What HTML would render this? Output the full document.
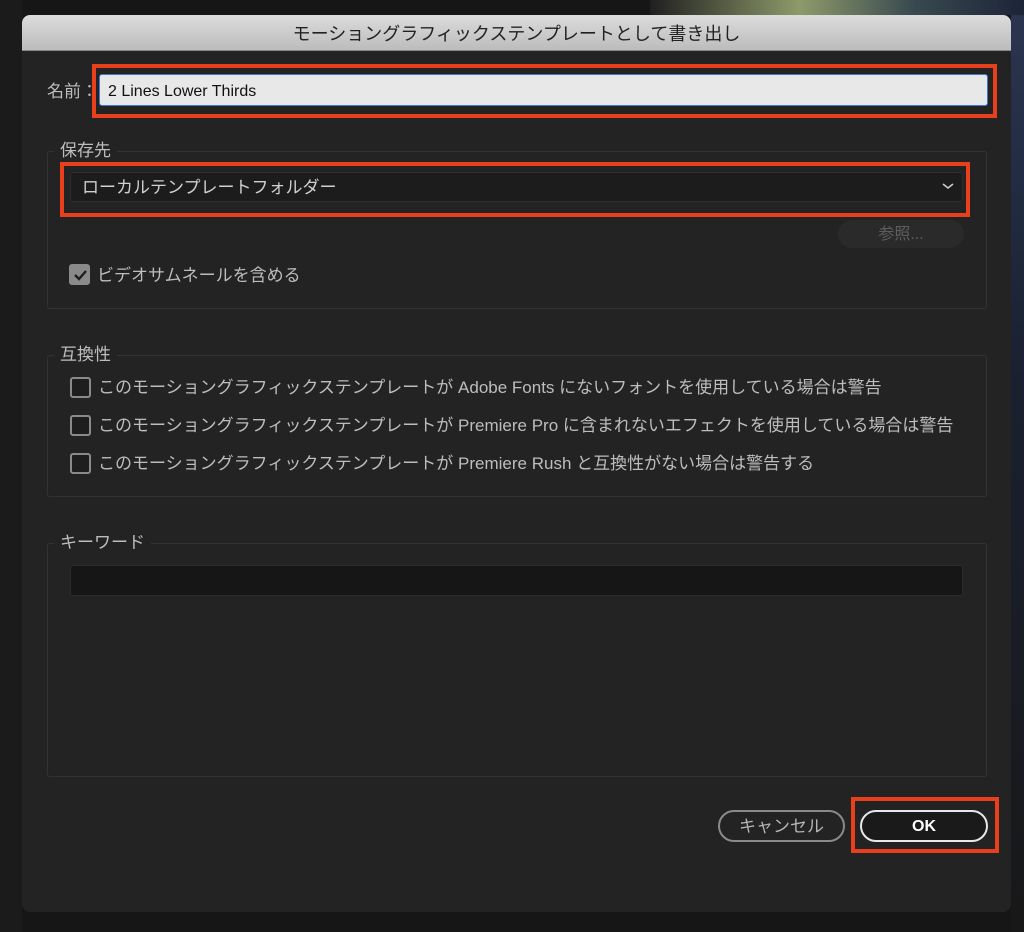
<!DOCTYPE html>
<html><head><meta charset="utf-8"><style>
*{box-sizing:border-box;margin:0;padding:0}
body{width:1024px;height:932px;background:#161616;position:relative;overflow:hidden;font-family:"Liberation Sans","Noto Sans CJK JP",sans-serif;color:#c0c0c0}
.a{position:absolute}
.fs{position:absolute;border:1px solid #333;border-radius:3px}
.lg{position:absolute;background:#232323;padding:0 6px;font-size:17px;color:#bdbdbd;line-height:20px}
.cb{position:absolute;width:21px;height:21px;border:2px solid #8a8a8a;border-radius:3px;background:#1e1e1e}
.t{position:absolute;font-size:17px;color:#bdbdbd;white-space:nowrap;line-height:20px}
.red{position:absolute;border:4px solid #e8401c}
</style></head><body>
<div class="a" style="left:0;top:0;width:22px;height:932px;background:#1b1b1b"></div>
<div class="a" style="left:650px;top:0;width:374px;height:15px;background:linear-gradient(90deg,#202020,#8e9a6a 40%,#3a4a50 70%,#1c2438)"></div>
<div class="a" style="left:1011px;top:15px;width:13px;height:917px;background:linear-gradient(180deg,#2a3550,#1a2030 40%,#181818)"></div>
<div class="a" style="left:22px;top:15px;width:989px;height:897px;background:#232323;border-radius:8px;overflow:hidden">
 <div class="a" style="left:0;top:0;width:989px;height:36px;background:linear-gradient(#dcdcdc,#bcbcbc);border-bottom:1px solid #888;text-align:center;font-size:18px;line-height:38px;color:#222">モーショングラフィックステンプレートとして書き出し</div>
</div>
<div class="t" style="left:47px;top:82px">名前：</div>
<div class="a" style="left:99px;top:74px;width:889px;height:32px;background:#e8e8e8;border:1px solid #3d7ad6;border-radius:3px;color:#111;font-size:16px;line-height:34px;padding-left:8px">2 Lines Lower Thirds</div>
<div class="red" style="left:92px;top:64px;width:905px;height:54px"></div>
<div class="fs" style="left:47px;top:151px;width:940px;height:158px"></div>
<div class="lg" style="left:54px;top:141px">保存先</div>
<div class="a" style="left:70px;top:172px;width:893px;height:30px;background:#1c1c1c;border:1px solid #2e2e2e;border-radius:3px;font-size:17px;line-height:30px;padding-left:11px;color:#d0d0d0">ローカルテンプレートフォルダー</div>
<svg class="a" style="left:941px;top:181px" width="14" height="10"><path d="M2 3l5 4 5-4" stroke="#ccc" stroke-width="1.6" fill="none"/></svg>
<div class="red" style="left:60px;top:162px;width:910px;height:55px"></div>
<div class="a" style="left:838px;top:220px;width:126px;height:28px;background:#2a2a2a;border-radius:14px;text-align:center;line-height:30px;font-size:16px;color:#5e5e5e">参照...</div>
<div class="cb" style="left:69px;top:264px;background:#8a8a8a"></div>
<svg class="a" style="left:70px;top:265px" width="20" height="20"><path d="M5 10l4 4 7-8" stroke="#1e1e1e" stroke-width="2.4" fill="none"/></svg>
<div class="t" style="left:97px;top:266px">ビデオサムネールを含める</div>
<div class="fs" style="left:47px;top:355px;width:940px;height:142px"></div>
<div class="lg" style="left:54px;top:345px">互換性</div>
<div class="cb" style="left:70px;top:377px"></div>
<div class="t" style="left:98px;top:378px">このモーショングラフィックステンプレートが Adobe Fonts にないフォントを使用している場合は警告</div>
<div class="cb" style="left:70px;top:415px"></div>
<div class="t" style="left:98px;top:416px">このモーショングラフィックステンプレートが Premiere Pro に含まれないエフェクトを使用している場合は警告</div>
<div class="cb" style="left:70px;top:453px"></div>
<div class="t" style="left:98px;top:454px">このモーショングラフィックステンプレートが Premiere Rush と互換性がない場合は警告する</div>
<div class="fs" style="left:47px;top:543px;width:940px;height:234px"></div>
<div class="lg" style="left:54px;top:533px">キーワード</div>
<div class="a" style="left:70px;top:565px;width:893px;height:31px;background:#161616;border:1px solid #2c2c2c;border-radius:3px"></div>
<div class="a" style="left:718px;top:810px;width:127px;height:32px;border:2px solid #8a8a8a;border-radius:16px;text-align:center;line-height:30px;font-size:17px;color:#b5b5b5">キャンセル</div>
<div class="a" style="left:860px;top:810px;width:128px;height:32px;border:2px solid #e8e8e8;border-radius:16px;text-align:center;line-height:30px;font-size:16px;color:#fff;font-weight:bold;background:#1a1a1a">OK</div>
<div class="red" style="left:851px;top:797px;width:148px;height:56px"></div>
</body></html>
